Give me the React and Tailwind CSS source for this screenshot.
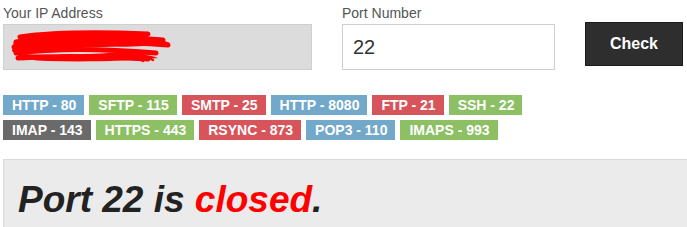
export default function App() {
  const row1 = [
    ["HTTP - 80", "bg-[#72a8c9]"],
    ["SFTP - 115", "bg-[#8dbf65]"],
    ["SMTP - 25", "bg-[#d6545a]"],
    ["HTTP - 8080", "bg-[#72a8c9]"],
    ["FTP - 21", "bg-[#d6545a]"],
    ["SSH - 22", "bg-[#8dbf65]"],
  ];
  const row2 = [
    ["IMAP - 143", "bg-[#6a6a6a]"],
    ["HTTPS - 443", "bg-[#8dbf65]"],
    ["RSYNC - 873", "bg-[#d6545a]"],
    ["POP3 - 110", "bg-[#72a8c9]"],
    ["IMAPS - 993", "bg-[#8dbf65]"],
  ];
  const Badge = ([t, c]) => (
    <span
      key={t}
      className={`${c} text-white font-bold text-[14px] leading-[20px] h-[20px] pl-[9px] pr-[8px] whitespace-nowrap`}
    >
      {t}
    </span>
  );
  return (
    <div className="w-[687px] h-[227px] overflow-hidden bg-white font-['Liberation_Sans',Arial,sans-serif]">
      <div className="flex items-start pl-[3px] pt-[3px]">
        <div className="flex flex-col w-[309px]">
          <label className="text-[14px] leading-[21px] text-[#555]">Your IP Address</label>
          <div className="h-[46px] bg-[#dcdcdc] border border-[#cfcfcf] flex items-center pl-[4px]">
            <svg width="165" height="36" viewBox="0 0 165 36">
              <path
                d="M6 12 C30 6 70 4 110 6 C130 7 150 9 162 14 C140 19 100 17 60 19 C40 20 20 21 8 24 C30 27 70 26 100 24 C120 23 140 25 150 29 C120 32 80 33 40 32 C25 32 10 29 4 22 Z"
                fill="#ff0000"
              />
              <path
                d="M8 13 C40 7 90 6 155 11 M6 18 C50 13 100 12 160 16 M8 24 C40 20 90 19 148 24 M10 29 C40 27 90 27 140 30 M12 8 C40 4 90 3 140 5"
                stroke="#ff0000"
                strokeWidth="5"
                fill="none"
                strokeLinecap="round"
              />
              <path d="M15 30 C30 26 50 32 70 28 M120 24 L135 32 M128 22 L145 31" stroke="#ff0000" strokeWidth="2.5" fill="none" strokeLinecap="round" />
            </svg>
          </div>
        </div>
        <div className="flex flex-col w-[213px] ml-[30px]">
          <label className="text-[14px] leading-[21px] text-[#555]">Port Number</label>
          <div className="h-[46px] bg-white border border-[#cfcfcf] flex items-center pl-[10px] text-[20px] text-[#333]">
            22
          </div>
        </div>
        <button className="ml-[30px] mt-[19px] w-[98px] h-[44px] bg-[#2e2e2e] border border-[#1a1a1a] text-white font-bold text-[16px]">
          Check
        </button>
      </div>
      <div className="flex flex-col gap-[5px] pl-[3px] mt-[25px]">
        <div className="flex gap-[5px]">{row1.map(Badge)}</div>
        <div className="flex gap-[5px]">{row2.map(Badge)}</div>
      </div>
      <div className="ml-[3px] mt-[19px] w-[720px] h-[80px] bg-[#ebebeb] border border-[#dadada] pl-[14px] pt-[20px]">
        <div className="text-[37px] leading-[40px] font-bold italic text-[#222]">
          Port 22 is <span className="text-[#ff0000]">closed</span>.
        </div>
      </div>
    </div>
  );
}
